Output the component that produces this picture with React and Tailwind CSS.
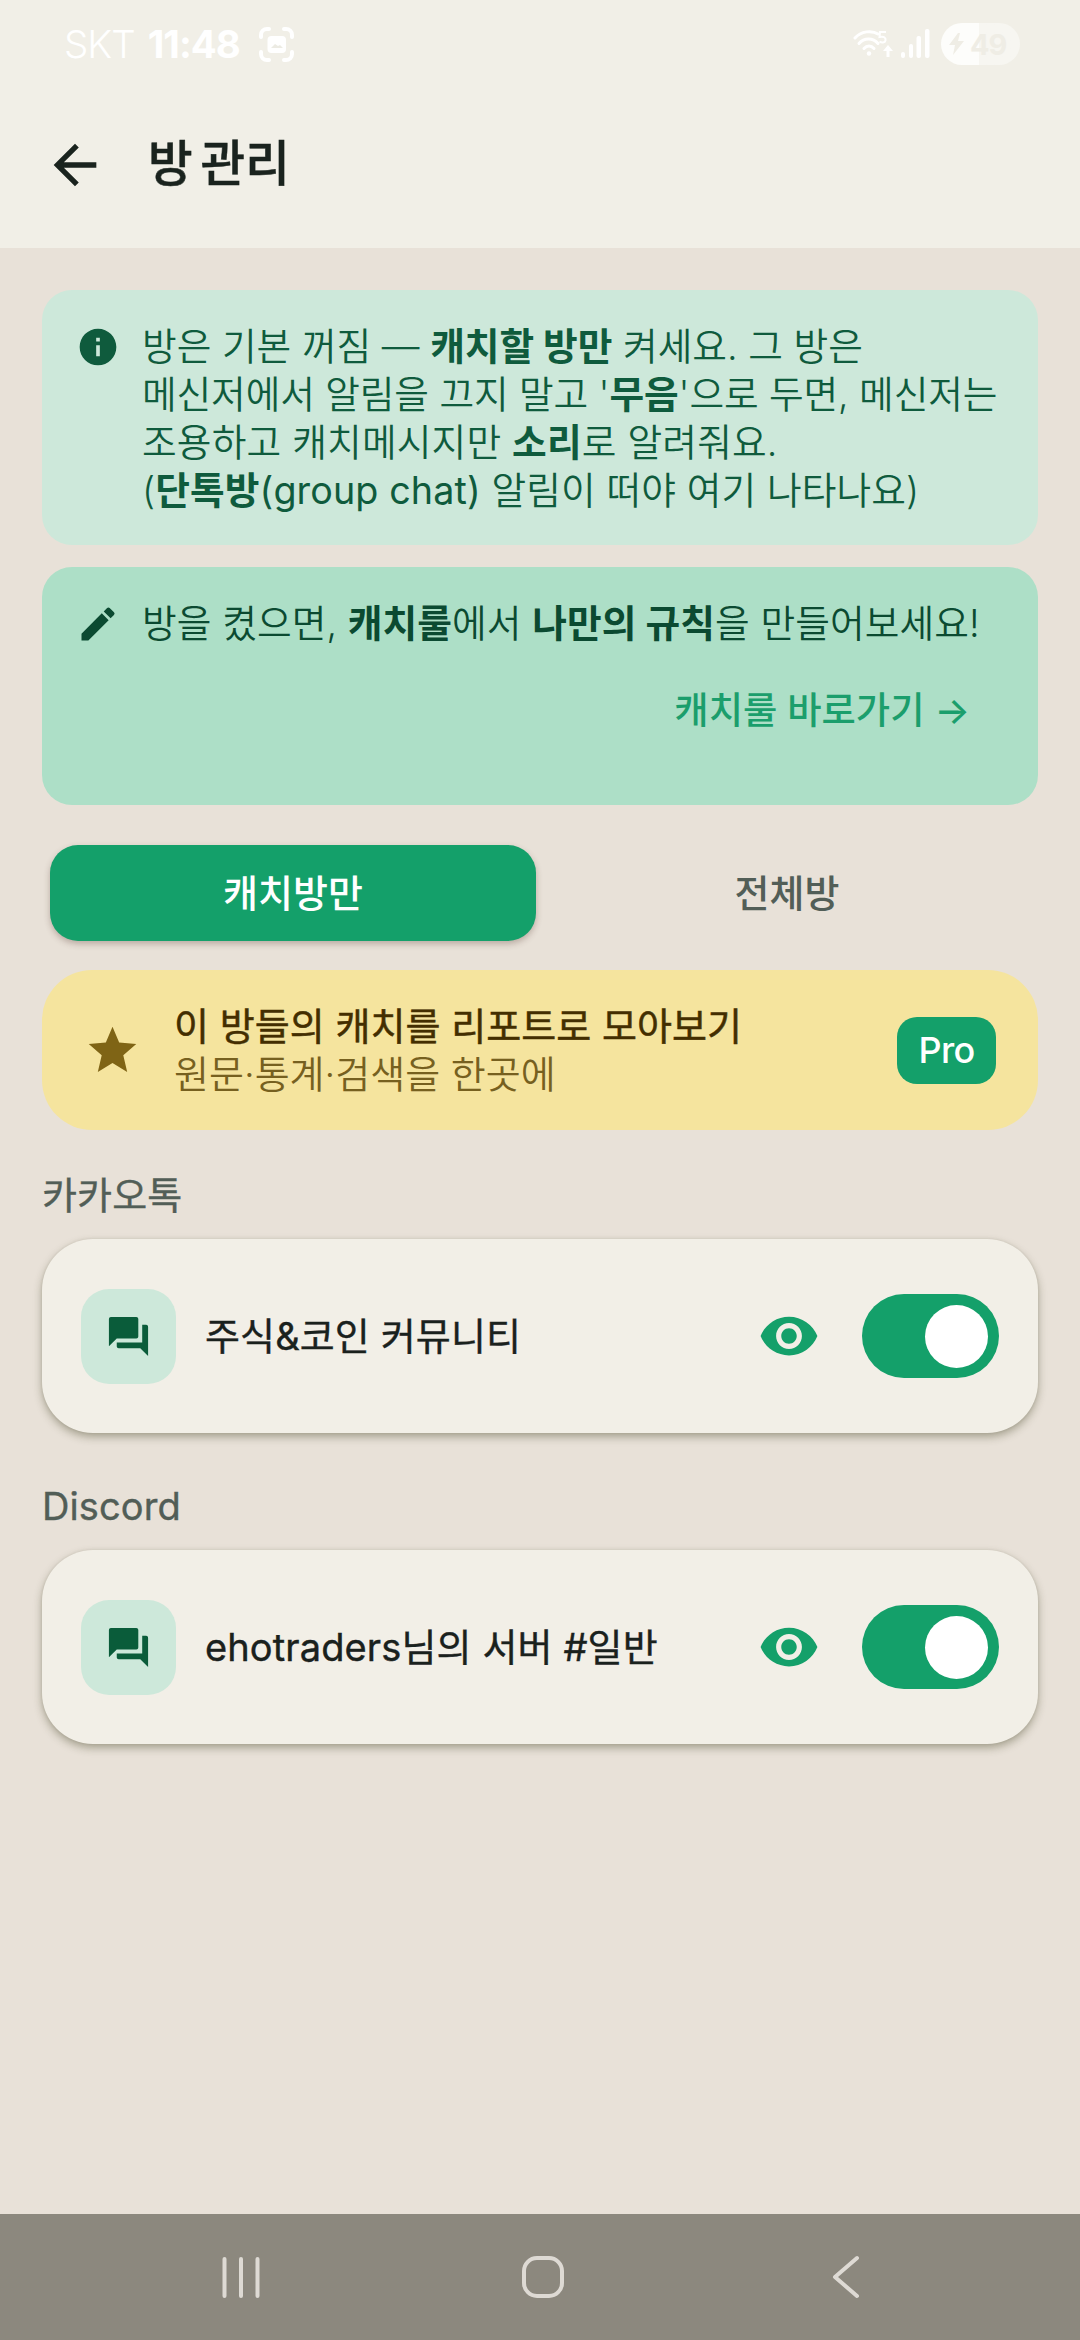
import React, { useState } from "react";
import {
  MdArrowBack,
  MdEdit,
  MdForum,
  MdInfo,
  MdVisibility,
} from "react-icons/md";

const sections = [
  { label: "카카오톡", rooms: ["주식&코인 커뮤니티"] },
  { label: "Discord", rooms: ["ehotraders님의 서버 #일반"] },
];

const tabs = ["캐치방만", "전체방"];

function StatusBar() {
  return (
    <div className="flex h-[88px] items-center justify-between pl-[64px] pr-[60px] text-white">
      <div className="flex items-center">
        <span className="text-[38.5px] leading-none font-[350] tracking-[-1px]">SKT</span>
        <span className="ml-[13px] text-[38.5px] leading-none font-bold tracking-[-1px]">11:48</span>
        <svg className="ml-[19px] h-[35px] w-[35px]" viewBox="0 0 35 35" fill="none">
          <path
            d="M2 10V8a6 6 0 0 1 6-6h2M25 2h2a6 6 0 0 1 6 6v2M33 25v2a6 6 0 0 1-6 6h-2M10 33H8a6 6 0 0 1-6-6v-2"
            stroke="currentColor"
            strokeWidth="4"
            strokeLinecap="round"
          />
          <rect x="8.500" y="9" width="18.500" height="17" rx="4" fill="currentColor" />
          <path d="M12 21l4-4 3 2 2-1 3 3z" fill="#ecebe3" />
        </svg>
      </div>
      <div className="flex items-center">
        <svg className="h-[30px] w-[40px]" viewBox="0 0 40 30" fill="none">
          <g stroke="currentColor" strokeWidth="3" strokeLinecap="round">
            <path d="M2 9c6-7 17-8 23-4" />
            <path d="M6 14.500c5-6 14-6 19 0" />
            <path d="M11 19.500c3-3.500 7-3.500 10 0" />
          </g>
          <circle cx="16" cy="24.500" r="2.200" fill="currentColor" />
          <path d="M33 3h-6l-.5 5c5-1 6.500 1 6 3.500s-4 2.500-6 1" stroke="currentColor" strokeWidth="2" />
          <path d="M35 16l5 6h-3.500v6h-3v-6H30z" fill="currentColor" />
        </svg>
        <svg className="ml-[8px] h-[30px] w-[29px]" viewBox="0 0 29 30" fill="currentColor">
          <rect x="0" y="23" width="4" height="6" rx="2" />
          <rect x="8" y="15" width="4" height="14" rx="2" />
          <rect x="15.500" y="7" width="4.500" height="22" rx="2" />
          <rect x="24" y="0" width="4.500" height="29" rx="2" />
        </svg>
        <div className="ml-[11px] flex h-[42px] w-[79px] items-center rounded-full bg-linear-to-r from-[#fdfdfb] from-48% to-[#f7f6f1] to-48% pl-[8px] text-[#efede5]">
          <svg className="h-[24px] w-[16px]" viewBox="0 0 16 24" fill="currentColor">
            <path d="M9 1L0 13h6l-2 10L15 9H9l2-8z" />
          </svg>
          <span className="ml-[5px] text-[29px] leading-none font-bold tracking-[-1px]">49</span>
        </div>
      </div>
    </div>
  );
}

function Header() {
  return (
    <header className="h-[248px] bg-[#f1efe7]">
      <StatusBar />
      <div className="flex h-[153px] items-center pl-[43px] text-[#1a231e]">
        <MdArrowBack className="size-[64px]" />
        <h1 className="ml-[41px] text-[48.5px] leading-none font-medium [word-spacing:-5px] [-webkit-text-stroke:0.5px]">
          방 관리
        </h1>
      </div>
    </header>
  );
}

function RoomCard({ name }) {
  const [on, setOn] = useState(true);

  return (
    <div className="flex h-[194px] items-center rounded-[51px] bg-[#f2efe7] pr-[39px] pl-[39px] shadow-[0_4px_9px_rgba(60,60,30,0.38),0_0_3px_rgba(60,60,30,0.1)]">
      <div className="flex size-[95px] items-center justify-center rounded-[28px] bg-[#cde8da]">
        <MdForum className="size-[47px] text-[#0a5c3a]" />
      </div>
      <span className="ml-[29px] flex-1 text-[38px] tracking-[0.12px] text-[#1a211d] [-webkit-text-stroke:0.4px]">
        {name}
      </span>
      <MdVisibility className="size-[62px] text-[#14a06a]" />
      <button
        onClick={() => setOn(!on)}
        className={`ml-[42px] flex h-[84px] w-[137px] items-center rounded-full px-[11px] ${
          on ? "justify-end bg-[#14a06a]" : "justify-start bg-[#c4c1b8]"
        }`}
      >
        <span className="size-[63px] rounded-full bg-white" />
      </button>
    </div>
  );
}

function NavBar() {
  return (
    <nav className="flex h-[126px] items-center bg-[#8c887e] pl-[220px] pr-[219px] text-[#dedad4]">
      <svg className="h-[44px] w-[42px]" viewBox="0 0 42 44" fill="none" stroke="currentColor" strokeWidth="4" strokeLinecap="round">
        <path d="M4.500 4v37M21 4v37M37.500 4v37" />
      </svg>
      <svg className="ml-[259px] h-[44px] w-[44px]" viewBox="0 0 44 44" fill="none" stroke="currentColor" strokeWidth="4">
        <rect x="3" y="3" width="38" height="38" rx="13" />
      </svg>
      <svg className="ml-[266px] h-[44px] w-[30px]" viewBox="0 0 30 44" fill="none" stroke="currentColor" strokeWidth="4" strokeLinecap="round" strokeLinejoin="round">
        <path d="M26 3L4 22l22 19" />
      </svg>
    </nav>
  );
}

export default function App() {
  const [tab, setTab] = useState(0);

  return (
    <div className="flex h-[2340px] w-[1080px] flex-col bg-[#e8e1d8] font-['Inter','Noto_Sans_CJK_KR',sans-serif] text-[37.7px]">
      <Header />

      <main className="flex-1 px-[42px] pt-[42px]">
        {/* 안내 */}
        <section className="flex h-[255px] rounded-[30px] bg-[#cde8da] pt-[32px] pl-[34px] text-[#0f5b3d]">
          <MdInfo className="mt-[3px] size-[44px] shrink-0" />
          <p className="ml-[22px] leading-[48px] font-[350] whitespace-nowrap">
            방은 기본 꺼짐 — <b className="font-bold">캐치할 방만</b> 켜세요. 그 방은
            <br />
            <span className="tracking-[-0.12px]">
              메신저에서 알림을 끄지 말고 '<b className="font-bold">무음</b>'으로 두면, 메신저는
            </span>
            <br />
            <span className="tracking-[0.18px]">
              조용하고 캐치메시지만 <b className="font-bold">소리</b>로 알려줘요.
            </span>
            <br />
            <span className="tracking-[0.1px]">
              (<b className="font-bold">단톡방</b>
              <span className="font-normal">(group chat)</span> 알림이 떠야 여기 나타나요)
            </span>
          </p>
        </section>

        {/* 캐치룰 바로가기 */}
        <section className="mt-[22px] h-[238px] rounded-[30px] bg-[#addfc7] pt-[32px] pl-[34px] text-[#0b4a31]">
          <div className="flex">
            <MdEdit className="mt-[3px] size-[44px] shrink-0" />
            <p className="ml-[22px] leading-[48px] font-[350] tracking-[0.08px] whitespace-nowrap">
              방을 켰으면, <b className="font-bold">캐치룰</b>에서 <b className="font-bold">나만의 규칙</b>을 만들어보세요!
            </p>
          </div>
          <div className="mt-[40px] flex justify-end pr-[68px]">
            <button className="text-[37.3px] leading-[48px] font-medium text-[#1b9e6c]">캐치룰 바로가기 →</button>
          </div>
        </section>

        <div className="mt-[40px] grid grid-cols-2 gap-[8px] px-[8px]">
          {tabs.map((name, i) => (
            <button
              key={name}
              onClick={() => setTab(i)}
              className={`h-[96px] rounded-[28px] text-[38px] font-medium ${
                tab === i
                  ? "bg-[#14a06a] text-white shadow-[0_3px_6px_rgba(80,50,40,0.3)]"
                  : "text-[#525e57]"
              }`}
            >
              {name}
            </button>
          ))}
        </div>

        {/* Pro 배너 */}
        <section className="mt-[29px] flex h-[160px] items-center rounded-[50px] bg-[#f5e49e] pr-[42px] pl-[42px]">
          <svg className="size-[57px]" viewBox="0 0 24 24" fill="#7f6415">
            <path d="M12 17.270L18.180 21l-1.640-7.030L22 9.240l-7.190-.61L12 2 9.190 8.630 2 9.240l5.460 4.730L5.820 21z" />
          </svg>
          <div className="ml-[33px] flex-1 text-[38px] leading-[48px]">
            <p className="tracking-[0.05px] text-[#432e00] [-webkit-text-stroke:0.5px]">이 방들의 캐치를 리포트로 모아보기</p>
            <p className="font-[350] text-[#76601f]">원문·통계·검색을 한곳에</p>
          </div>
          <span className="flex h-[67px] w-[99px] items-center justify-center rounded-[20px] bg-[#14a06a] text-[36px] font-medium tracking-[-0.7px] text-white">
            Pro
          </span>
        </section>

        <div className="mt-[41px] flex flex-col gap-[49px]">
          {sections.map((s) => (
            <section key={s.label}>
              <h2 className="mb-[20px] text-[38px] leading-[48px] tracking-[0.12px] text-[#525e57] [-webkit-text-stroke:0.4px]">
                {s.label}
              </h2>
              {s.rooms.map((room) => (
                <RoomCard key={room} name={room} />
              ))}
            </section>
          ))}
        </div>
      </main>

      <NavBar />
    </div>
  );
}
